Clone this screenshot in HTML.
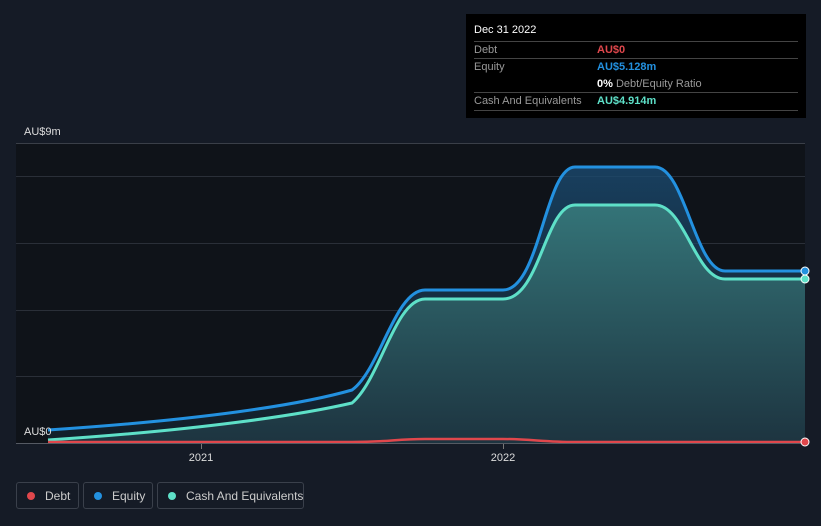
<!DOCTYPE html>
<html><head><style>
html,body{margin:0;width:821px;height:526px;overflow:hidden}
body{background:#151b26;font-family:"Liberation Sans",sans-serif;position:relative}
.tt{position:absolute;left:466px;top:14px;width:340px;height:104px;background:#000;color:#fff;font-size:11px}
.row{position:absolute;left:8px;width:324px;border-top:1px solid #444}
.lab{position:absolute;left:0;color:#999}
.val{position:absolute;left:123px;font-weight:bold}
.leg{position:absolute;top:482px;height:27px;border:1px solid #3a404b;border-radius:3px;color:#ccc;font-size:12px;line-height:26px;box-sizing:border-box;white-space:nowrap}
.dot{display:inline-block;width:8px;height:8px;border-radius:50%;margin:0 10px 0 10px}
</style></head><body>
<svg width="821" height="526" style="position:absolute;left:0;top:0">
<defs>
<linearGradient id="ge" x1="0" y1="0" x2="0" y2="1"><stop offset="0" stop-color="#1a4a70" stop-opacity=".8"/><stop offset="1" stop-color="#1a3a50" stop-opacity=".3"/></linearGradient>
<linearGradient id="gc" x1="0" y1="0" x2="0" y2="1"><stop offset="0" stop-color="#347478"/><stop offset="1" stop-color="#1d3440"/></linearGradient>
</defs>
<rect x="16" y="143" width="789" height="300" fill="#0f1319"/>
<g stroke="#2a2f38" stroke-width="1">
<line x1="16" y1="143.5" x2="805" y2="143.5" stroke="#3a3f48"/>
<line x1="16" y1="176.5" x2="805" y2="176.5"/>
<line x1="16" y1="243.5" x2="805" y2="243.5"/>
<line x1="16" y1="310.5" x2="805" y2="310.5"/>
<line x1="16" y1="376.5" x2="805" y2="376.5"/>
</g>
<path d="M48 430 C200 420 300 405 352 390 C380 370 395 290 425 290 L503 290 C540 290 545 167 575 167 L655 167 C685 167 695 271 725 271 L805 271 L805 443 L48 443Z" fill="url(#ge)"/>
<path d="M48 440 C200 430 300 415 352 403 C380 380 395 299 425 299 L503 299 C540 299 545 205 575 205 L655 205 C685 205 695 279 725 279 L805 279 L805 443 L48 443Z" fill="url(#gc)"/>
<path d="M48 430 C200 420 300 405 352 390 C380 370 395 290 425 290 L503 290 C540 290 545 167 575 167 L655 167 C685 167 695 271 725 271 L805 271" fill="none" stroke="#2391e0" stroke-width="3"/>
<path d="M48 440 C200 430 300 415 352 403 C380 380 395 299 425 299 L503 299 C540 299 545 205 575 205 L655 205 C685 205 695 279 725 279 L805 279" fill="none" stroke="#5ee0c8" stroke-width="3"/>
<path d="M48 442 L352 442 C390 442 395 439 425 439 L503 439 C530 439 545 442 575 442 L805 442" fill="none" stroke="#e0474c" stroke-width="2.5"/>
<line x1="16" y1="443.5" x2="805" y2="443.5" stroke="#555a63"/>
<line x1="201.5" y1="444" x2="201.5" y2="449" stroke="#777"/>
<line x1="503.5" y1="444" x2="503.5" y2="449" stroke="#777"/>
<circle cx="805" cy="271" r="4" fill="#2391e0" stroke="#fff" stroke-width="1"/>
<circle cx="805" cy="279" r="4" fill="#5ee0c8" stroke="#fff" stroke-width="1"/>
<circle cx="805" cy="442" r="4" fill="#e0474c" stroke="#fff" stroke-width="1"/>
<text x="24" y="135" fill="#ddd" font-size="11" font-family="Liberation Sans">AU$9m</text>
<text x="24" y="435" fill="#ddd" font-size="11" font-family="Liberation Sans">AU$0</text>
<text x="201" y="461" fill="#ddd" font-size="11" text-anchor="middle" font-family="Liberation Sans">2021</text>
<text x="503" y="461" fill="#ddd" font-size="11" text-anchor="middle" font-family="Liberation Sans">2022</text>
</svg>
<div class="tt">
<div style="position:absolute;left:8px;top:10px">Dec 31 2022</div>
<div class="row" style="top:27px"><span class="lab" style="top:2px">Debt</span><span class="val" style="top:2px;color:#e0474c">AU$0</span></div>
<div class="row" style="top:44px"><span class="lab" style="top:2px">Equity</span><span class="val" style="top:2px;color:#2391e0">AU$5.128m</span><span style="position:absolute;left:123px;top:19px;white-space:nowrap"><b>0%</b> <span style="color:#999">Debt/Equity Ratio</span></span></div>
<div class="row" style="top:78px"><span class="lab" style="top:2px">Cash And Equivalents</span><span class="val" style="top:2px;color:#5ee0c8">AU$4.914m</span></div>
<div class="row" style="top:96px"></div>
</div>
<div class="leg" style="left:16px;width:63px"><span class="dot" style="background:#e0474c"></span>Debt</div>
<div class="leg" style="left:83px;width:70px"><span class="dot" style="background:#2391e0"></span>Equity</div>
<div class="leg" style="left:157px;width:147px"><span class="dot" style="background:#5ee0c8"></span>Cash And Equivalents</div>
</body></html>
